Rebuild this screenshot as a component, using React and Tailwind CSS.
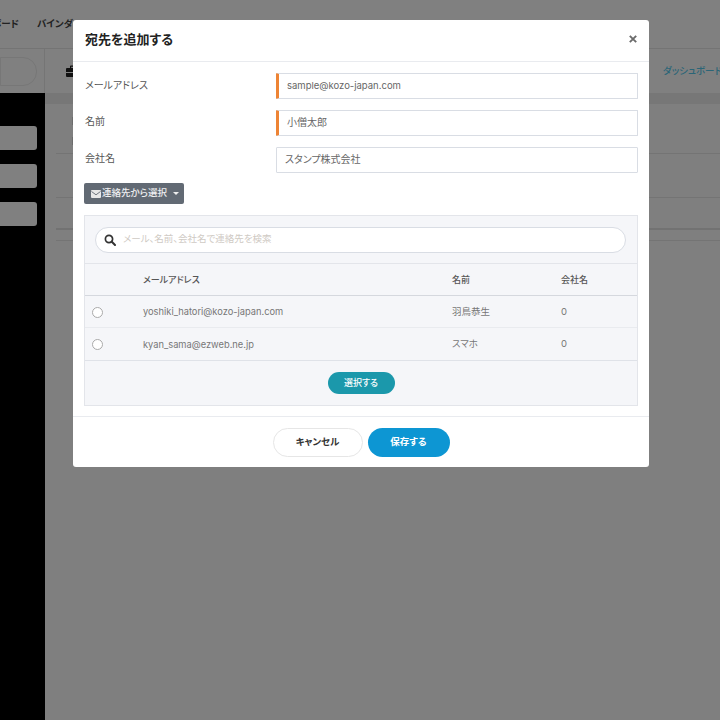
import React from "react";

function Label({ children, top }) {
  return <div className={`w-[192px] shrink-0 pl-[1px] ${top} text-[10px] leading-[16px] text-[#555]`}>{children}</div>;
}

function Row({ email, name, company, height, border }) {
  return (
    <div className={`flex ${height} items-center border-b ${border} pt-[1px] text-[9.5px] text-[#777]`}>
      <div className="w-[58px] pl-[7px]">
        <div className="h-[11px] w-[11px] rounded-full border border-[#aaa] bg-white" />
      </div>
      <div className="w-[309px] text-[9.3px]">{email}</div>
      <div className="w-[109px]">{name}</div>
      <div>{company}</div>
    </div>
  );
}

export default function App() {
  return (
    <div className="relative h-[720px] w-[720px] overflow-hidden bg-[#7f7f7f] font-['Inter','Noto_Sans_CJK_JP',sans-serif] [font-feature-settings:'palt']">
      <div className="flex h-[49px] items-center border-b border-[#747474] bg-[#808080] text-[9.5px] font-bold text-[#222]">
        <span className="-ml-[8px] w-[45px] text-right pr-[23px] whitespace-nowrap">ボード</span>
        <span className="whitespace-nowrap">バインダー</span>
      </div>
      <div className="flex h-[44px] bg-[#808080]">
        <div className="flex w-[45px] shrink-0 items-center border-r border-[#757575]">
          <div className="h-[29px] w-[37px] rounded-r-[14px] border border-[#777]" />
        </div>
        <div className="flex flex-1 items-center pl-[21px]">
          <svg width="14" height="12" viewBox="0 0 14 12" className="shrink-0">
            <path d="M4 3V1.5A1 1 0 0 1 5 .5h4a1 1 0 0 1 1 1V3h3a1 1 0 0 1 1 1v3H0V4a1 1 0 0 1 1-1zM5.2 3h3.6V1.7H5.2zM0 8h14v3a1 1 0 0 1-1 1H1a1 1 0 0 1-1-1z" fill="#111" />
          </svg>
          <span className="ml-auto w-[57px] shrink-0 overflow-hidden whitespace-nowrap text-[9.5px] font-medium text-[#2a6577]">ダッシュボード</span>
        </div>
      </div>
      <div className="flex h-[627px]">
        <div className="flex w-[45px] shrink-0 flex-col gap-[14px] bg-black pr-[8px] pt-[33px]">
          <div className="h-[24px] rounded-r-[3px] bg-[#808080]" />
          <div className="h-[24px] rounded-r-[3px] bg-[#808080]" />
          <div className="h-[24px] rounded-r-[3px] bg-[#808080]" />
        </div>
        <div className="flex-1">
          <div className="h-[11px] bg-[#777]" />
          <div className="ml-[11px]">
            <div className="relative h-[50px] border-b border-[#747474]">
              <div className="absolute left-[16px] top-[13px] h-[8px] w-[2px] bg-[#6c6c6c]" />
              <div className="absolute left-[16px] top-[33px] h-[8px] w-[2px] bg-[#6c6c6c]" />
            </div>
            <div className="h-[44px] border-b border-[#747474]" />
            <div className="h-[32px] border-b-2 border-[#727272]" />
            <div className="h-[11px] border-b border-[#747474]" />
          </div>
        </div>
      </div>

      <div className="absolute left-[73px] top-[20px] flex h-[447px] w-[576px] flex-col rounded-[3px] bg-white">
        <div className="flex h-[42px] shrink-0 items-center justify-between border-b border-[#e9ebef] pl-[12px] pr-[12px]">
          <div className="-mt-[2px] text-[13px] font-bold text-[#222]">宛先を追加する</div>
          <svg width="8" height="8" viewBox="0 0 8 8" className="-mt-[3px]">
            <path d="M.8 .8 L7.2 7.2 M7.2 .8 L.8 7.2" stroke="#6b6b6b" strokeWidth="1.9" />
          </svg>
        </div>

        <div className="flex flex-col px-[11px] pt-[11px]">
          <div className="flex h-[26px]">
            <Label top="pt-[4px]">メールアドレス</Label>
            <div className="flex flex-1 items-center rounded-[1px] border border-[#d9dde4] border-l-[3px] border-l-[#ee8434] pl-[8px] text-[9.5px] text-[#666]">sample@kozo-japan.com</div>
          </div>
          <div className="mt-[11px] flex h-[26px]">
            <Label top="pt-[3px]">名前</Label>
            <div className="flex flex-1 items-center rounded-[1px] border border-[#d9dde4] border-l-[3px] border-l-[#ee8434] pb-[1px] pl-[8px] text-[10px] text-[#666]">小僧太郎</div>
          </div>
          <div className="mt-[11px] flex h-[26px]">
            <Label top="pt-[3px]">会社名</Label>
            <div className="flex flex-1 items-center rounded-[1px] border border-[#d9dde4] pb-[2px] pl-[8px] text-[10px] text-[#666]">スタンプ株式会社</div>
          </div>

          <div className="mt-[10px] flex h-[21px] w-[100px] items-center gap-[1px] whitespace-nowrap rounded-[2px] bg-[#626a74] pl-[7px] text-[9.5px] font-medium text-white/90">
            <svg width="10" height="8" viewBox="0 0 10 8" className="shrink-0">
              <rect width="10" height="8" rx="1" fill="#e8e8e8" />
              <path d="M0.5 1.5 L5 4.8 L9.5 1.5" fill="none" stroke="#626a74" strokeWidth="0.9" />
            </svg>
            <span>連絡先から選択</span>
            <svg width="6" height="3" viewBox="0 0 6 3" className="ml-[5px] shrink-0">
              <path d="M0 0 H6 L3 3 Z" fill="#eee" />
            </svg>
          </div>

          <div className="mt-[11px] h-[191px] border border-[#e3e5ea] bg-[#f5f6f9]">
            <div className="flex h-[48px] items-center border-b border-[#e3e5ea] pl-[10px] pr-[11px]">
              <div className="flex h-[26px] flex-1 items-center rounded-[13px] border border-[#d9dde4] bg-white pl-[8px] text-[9.5px] text-[#cfcac4]">
                <svg width="12" height="12" viewBox="0 0 12 12" className="shrink-0">
                  <circle cx="5" cy="5" r="3.6" fill="none" stroke="#333" strokeWidth="1.7" />
                  <path d="M7.8 7.8 L11 11" stroke="#333" strokeWidth="2" strokeLinecap="round" />
                </svg>
                <span className="ml-[7px]">メール、名前、会社名で連絡先を検索</span>
              </div>
            </div>
            <div className="flex h-[32px] items-center border-b border-[#d5d8de] text-[9px] font-medium text-[#555]">
              <div className="w-[58px]" />
              <div className="w-[309px]">メールアドレス</div>
              <div className="w-[109px]">名前</div>
              <div>会社名</div>
            </div>
            <Row email="yoshiki_hatori@kozo-japan.com" name="羽鳥恭生" company="0" height="h-[32px]" border="border-[#e9ebef]" />
            <Row email="kyan_sama@ezweb.ne.jp" name="スマホ" company="0" height="h-[33px]" border="border-[#dfe2e8]" />
            <div className="flex h-[44px] items-center justify-center">
              <div className="flex h-[22px] w-[67px] items-center justify-center rounded-[11px] bg-[#1b98ab] text-[9px] font-medium text-white">選択する</div>
            </div>
          </div>
        </div>

        <div className="mt-[10px] flex flex-1 items-center justify-center gap-[5px] border-t border-[#e9ebef] pt-[1px]">
          <div className="flex h-[29px] w-[90px] items-center justify-center rounded-[15px] border border-[#e6e6e6] bg-white text-[9.5px] font-bold text-[#333]">キャンセル</div>
          <div className="flex h-[29px] w-[82px] items-center justify-center rounded-[15px] bg-[#0d96d3] text-[9.5px] font-bold text-white">保存する</div>
        </div>
      </div>
    </div>
  );
}
